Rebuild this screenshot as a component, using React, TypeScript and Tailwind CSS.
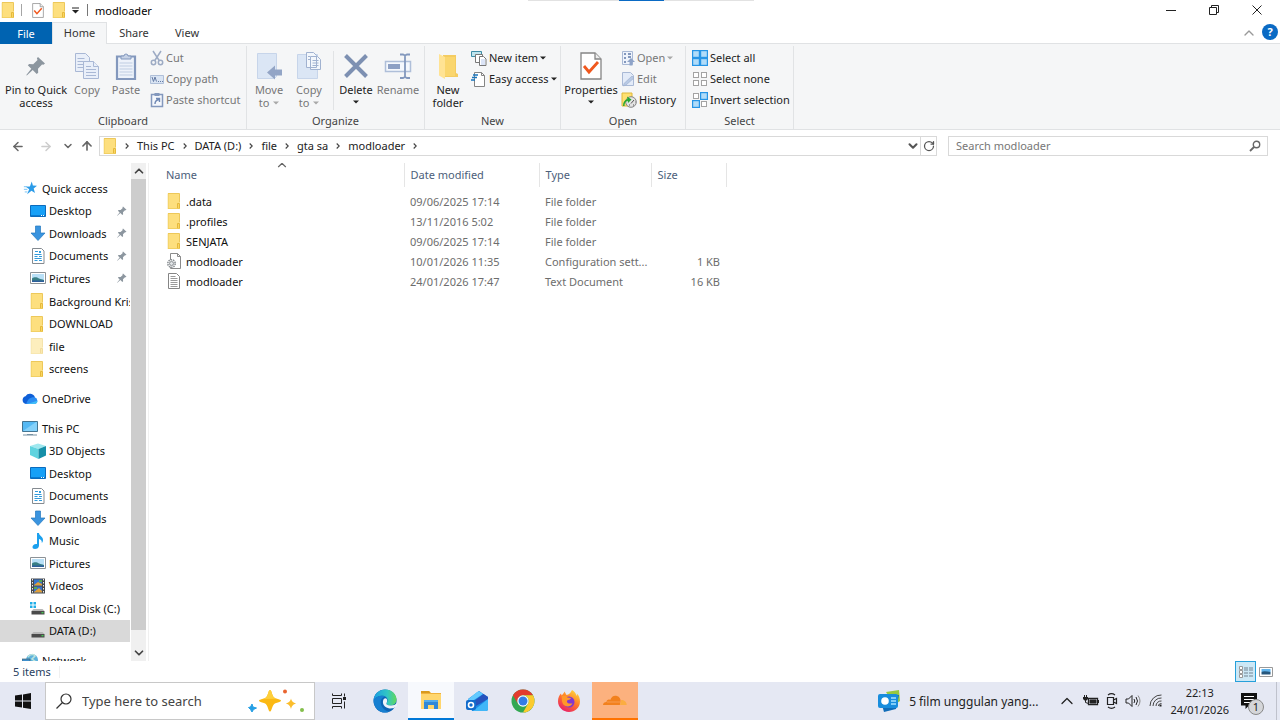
import type { ReactNode } from "react";
import { ChevronDown, ChevronUp, RotateCw, ArrowLeft, ArrowRight, ArrowUp } from "lucide-react";

function FolderIcon({ faded = false, className = "h-4 w-[14px]" }: { faded?: boolean; className?: string }) {
  return (
    <svg viewBox="0 0 14 16" className={`shrink-0 ${className}`} opacity={faded ? 0.5 : 1}>
      <path d="M1 .5h11.5V16H1z" fill="#fddf7e" />
      <path d="M1 .5h11.5v9" fill="none" stroke="#edc85a" />
      <path d="M10.500 10.500h2v5h-2z" fill="#fbd660" stroke="#e5b93c" />
      <path d="M1 15.500h12M1.200.5V16" stroke="#efcb5d" strokeWidth=".8" />
    </svg>
  );
}

function CheckDocIcon({ className }: { className: string }) {
  return (
    <svg viewBox="0 0 22 28" className={`shrink-0 ${className}`}>
      <path d="M1 1h14l6 6v20H1z" fill="#fff" stroke="#858585" strokeWidth="1.300" />
      <path d="M15 1v6h6" fill="#eee" stroke="#858585" strokeWidth="1.300" />
      <path d="M4 14l5 6 9-10" fill="none" stroke="#f0581e" strokeWidth="2.800" />
    </svg>
  );
}

function PinIcon({ className }: { className: string }) {
  return (
    <svg viewBox="0 0 20 20" className={`shrink-0 ${className}`} fill="#8c969f">
      <path d="M12 1l7 6.500-1.600 1.200-1.400-.3-4 4.300.2 4-1.500 1.300-4-4L.8 19.500.3 19l5-6.200-3.500-3.500L3.200 8l4 .2L11.500 4l-.6-1.700z" />
    </svg>
  );
}

function CopyIcon() {
  return (
    <svg viewBox="0 0 26 28" className="h-7 w-[26px]">
      <g fill="#e9eff9" stroke="#a9b8d5">
        <path d="M1.500 1.500h10l4 4v14h-14z" />
        <path d="M3.500 6.500h7m-7 3h9m-9 3h9m-9 3h9" />
        <path d="M9.500 9.500h10l5 5v12h-15z" />
        <path d="M19.500 9.500v5h5M12 14.500h5m-5 3h10m-10 3h10m-10 3h10" />
      </g>
    </svg>
  );
}

function PasteIcon() {
  return (
    <svg viewBox="0 0 22 28" className="h-7 w-[22px]">
      <path d="M2 4.500h18V27H2z" fill="#edf2fa" stroke="#8398bd" strokeWidth="2.200" />
      <path d="M6 7V4h3a2 2 0 014 0h3v3z" fill="#c6d2e6" stroke="#8398bd" />
      <path d="M4.500 11h13m-13 3h13m-13 3h13m-13 3h13m-13 3h13" stroke="#bfcde2" />
    </svg>
  );
}

function CutIcon() {
  return (
    <svg viewBox="0 0 14 16" className="h-4 w-[14px]" fill="none" stroke="#9dabc4" strokeWidth="1.500">
      <path d="M3 1l6.500 10M11 1L4.500 11" />
      <circle cx="3.500" cy="12.500" r="2.200" />
      <circle cx="10.500" cy="12.500" r="2.200" />
    </svg>
  );
}

function CopyPathIcon() {
  return (
    <svg viewBox="0 0 14 16" className="h-4 w-[14px]">
      <path d="M.5 4.500h13v8H.5z" fill="#d9e4f3" stroke="#afbfd8" />
      <path d="M2 6l1.500 4.500L5 6l1.500 4.500" fill="none" stroke="#667ca5" />
      <path d="M8 10.500h1m1 0h1m1 0h1" stroke="#667ca5" />
    </svg>
  );
}

function PasteShortcutIcon() {
  return (
    <svg viewBox="0 0 14 16" className="h-4 w-[14px]">
      <path d="M1.500 2.500h11v12h-11z" fill="#f4f7fc" stroke="#8398bd" strokeWidth="1.500" />
      <path d="M4.500 1h5v3h-5z" fill="#8398bd" />
      <path d="M5 12c0-3 1-4 4-4.500M6 6.500h3.500V10" fill="none" stroke="#6f88b4" strokeWidth="1.400" />
    </svg>
  );
}

function MoveIcon() {
  return (
    <svg viewBox="0 0 26 28" className="h-7 w-[26px]">
      <path d="M1.500 1.500h19v23l-2 2h-17z" fill="#dbe6f5" stroke="#c7d5ea" />
      <path d="M11 20.500l8-7v4h7v6h-7v4z" fill="#93a5c6" />
    </svg>
  );
}

function CopyToIcon() {
  return (
    <svg viewBox="0 0 26 28" className="h-7 w-[26px]">
      <path d="M1.500 2.500h20v24h-20z" fill="#dbe6f5" stroke="#c7d5ea" />
      <path d="M10.500.5h7l3 3v12h-10zM14.500 4.500h7l3 3v10h-10z" fill="#f3f7fc" stroke="#a1b2d0" />
      <path d="M12 4.500h2m-2 3h2M16.500 8.500h6m-6 2.500h6m-6 2.500h6" stroke="#a1b2d0" />
    </svg>
  );
}

function DeleteIcon() {
  return (
    <svg viewBox="0 0 26 28" className="h-7 w-[26px]">
      <path d="M2.500 3.500l21 21m0-21l-21 21" stroke="#7d90b2" strokeWidth="4" />
    </svg>
  );
}

function RenameIcon() {
  return (
    <svg viewBox="0 0 28 28" className="h-7 w-7" fill="none">
      <path d="M1.500 9.500h25v10h-25z" fill="#f5f8fd" stroke="#afbfd9" strokeWidth="1.500" />
      <path d="M4 12h12v5H4z" fill="#8da0c4" />
      <path d="M16 2.500h3l2 1 2-1h3M21 3v22M16 26h3l2-1 2 1h3" stroke="#8398bd" strokeWidth="1.800" />
    </svg>
  );
}

function NewFolderIcon() {
  return (
    <svg viewBox="0 0 20 28" className="h-7 w-5">
      <path d="M5 3h13v18l2 1v3H5z" fill="#f4cc61" />
      <path d="M1 2l6 3v22l-6-3.500z" fill="#ffe394" />
      <path d="M7 5h10v19H7z" fill="#fad66e" />
    </svg>
  );
}

function NewItemIcon() {
  return (
    <svg viewBox="0 0 16 16" className="h-4 w-4">
      <path d="M.5 1.500h10v5H.5z" fill="#bfe5ee" stroke="#3e8ca5" />
      <path d="M4.500 4.500h7v8h-7z" fill="#fff" stroke="#777" />
      <path d="M8.500 6.500h4l2.500 2.500v6.500H8.500z" fill="#fff" stroke="#777" />
      <path d="M10 10h4m-4 2h4m-4 2h4" stroke="#b7c9ee" />
    </svg>
  );
}

function EasyAccessIcon() {
  return (
    <svg viewBox="0 0 16 16" className="h-4 w-4">
      <path d="M3.500 1.500h7l3 3v11h-10z" fill="#fff" stroke="#858585" />
      <path d="M10.500 1.500v3h3" fill="none" stroke="#858585" />
      <path d="M2 4h5M1 6.500h5M0 9h4" stroke="#1976bd" strokeWidth="1.500" />
    </svg>
  );
}

function OpenIcon() {
  return (
    <svg viewBox="0 0 14 16" className="h-4 w-[14px]">
      <path d="M1.500 1.500h10v13h-10z" fill="#eef3fb" stroke="#a9b9d5" />
      <path d="M3 4h2m-2 4h2m-2 4h2M7 4h3M7 7h3" stroke="#8398bd" strokeWidth="2" />
      <path d="M6 12l4-4 4 4h-2.500v3.500h-3V12z" fill="#8ea3c8" />
    </svg>
  );
}

function EditIcon() {
  return (
    <svg viewBox="0 0 14 16" className="h-4 w-[14px]">
      <path d="M1.500 1.500h8l3 3v10h-11z" fill="#e3ebf8" stroke="#a9b9d5" />
      <path d="M3 12.500L11 5l2 2-8 7-2.500 1z" fill="#b8c9e4" stroke="#a0b2d0" strokeWidth=".7" />
    </svg>
  );
}

function HistoryIcon() {
  return (
    <svg viewBox="0 0 16 16" className="h-4 w-4">
      <path d="M1 1h10v13H1z" fill="#ffe071" stroke="#dfb83a" />
      <circle cx="10" cy="10" r="5.300" fill="#e3e3e3" stroke="#858585" />
      <path d="M2 14c0-4 1.500-6 4.500-7L6 4.500l4.500 3L7 11l-.3-2.200C4.500 9.500 3.500 11 3.500 14z" fill="#27a830" />
      <path d="M10 11.500l3-3.500M8 13h1m3 0h1m1-3h.5" stroke="#555" />
    </svg>
  );
}

function SelectIcon({ filled }: { filled: boolean[] }) {
  return (
    <svg viewBox="0 0 16 16" className="h-4 w-4">
      {filled.map((on, i) => {
        const x = (i % 2) * 8;
        const y = i > 1 ? 8 : 0;
        return on ? (
          <rect key={i} x={x + 0.6} y={y + 0.6} width="6.800" height="6.800" fill="#b1dcf9" stroke="#2795e6" strokeWidth="1.200" />
        ) : (
          <rect key={i} x={x + 1.5} y={y + 1.5} width="5" height="5" fill="#fff" stroke="#a3a3a3" />
        );
      })}
    </svg>
  );
}

function StarIcon() {
  return (
    <svg viewBox="0 0 16 16" className="ml-[1px] h-[14px] w-[14px]">
      <path d="M10 .5l1.300 4.700 4.700.3-3.800 3 1.500 5.200-4-2.500-5 4 2.400-5.800-3.800-2.800 4.600-.3z" fill="#2b9be8" />
      <path d="M1 6.500h4M1 9.500h4M2 12.500h3" stroke="#6abdf2" />
    </svg>
  );
}

function DesktopIcon() {
  return (
    <svg viewBox="0 0 16 16" className="h-4 w-4">
      <path d="M.5 2.500h15v11H.5z" fill="#17a0f7" stroke="#0b6bbd" />
      <path d="M1 12.500h14" stroke="#0a7bd0" />
      <path d="M11 12.500h1m1 0h1" stroke="#fff" />
    </svg>
  );
}

function DownloadIcon() {
  return (
    <svg viewBox="0 0 16 16" className="h-4 w-4">
      <path d="M5.500 1h5v7H15l-7 7.500L1 8h4.500z" fill="#3a94df" stroke="#2478bf" strokeWidth=".7" />
    </svg>
  );
}

function DocumentIcon() {
  return (
    <svg viewBox="0 0 16 16" className="h-4 w-4">
      <path d="M2.500.5h9l2.500 2.500v12.500H2.500z" fill="#fff" stroke="#858b91" />
      <path d="M5 3.500h3M4.500 6.500h7M4.500 8.500h3m1.500 0h3M4.500 10.500h7M4.500 12.500h3m1.500 0h3" stroke="#329bdc" />
      <path d="M9 3h2v2H9z" fill="#329bdc" />
    </svg>
  );
}

function PictureIcon() {
  return (
    <svg viewBox="0 0 16 16" className="h-4 w-4">
      <path d="M.5 2.500h15v11H.5z" fill="#fff" stroke="#8c9297" />
      <path d="M2 4h12v8H2z" fill="#b9e0f7" />
      <path d="M2 8.500c3-2 5-1 7 0s3 .5 5 1.500v2H2z" fill="#397f85" />
      <path d="M2 10.500h12V12H2z" fill="#2e5f9c" />
    </svg>
  );
}

function OneDriveIcon() {
  return (
    <svg viewBox="0 0 16 16" className="h-4 w-4">
      <path d="M4 13a4 4 0 01-.5-7.800A5.300 5.300 0 0113 6.500L7 13z" fill="#0f5fd7" />
      <path d="M4 13c2-5 4-7 8.500-6.800a3.500 3.500 0 01.3 6.800z" fill="#2b8df3" />
      <path d="M5 13c3-.5 7-2.500 10.500-3.200A3.200 3.200 0 0112.800 13z" fill="#42bdf8" />
    </svg>
  );
}

function PcIcon() {
  return (
    <svg viewBox="0 0 16 16" className="h-4 w-4">
      <path d="M.5 1.500h15v10H.5z" fill="#55b9f4" stroke="#437491" />
      <path d="M1 11L14 2h1v9z" fill="#84d1fa" />
      <path d="M5 14.500h6M1 15h14" stroke="#7691a3" />
    </svg>
  );
}

function CubeIcon() {
  return (
    <svg viewBox="0 0 16 16" className="h-4 w-4">
      <path d="M0 3l8-2.500L16 3 8.500 6z" fill="#9fe8ef" />
      <path d="M0 3l8.500 3v10L0 12z" fill="#5fd3df" />
      <path d="M8.500 6L16 3v9.500L8.500 16z" fill="#168fa8" />
    </svg>
  );
}

function MusicIcon() {
  return (
    <svg viewBox="0 0 16 16" className="h-4 w-4">
      <path d="M7 0h2c0 3 4 3.500 4 7 0 1.500-.7 2.500-1.200 3 .3-2.500-1-3.500-2.800-4v6.500C9 15 7 16 5 16s-2.500-1-2.500-2c0-2 2-3.500 4.500-3z" fill="#1ba0ee" />
    </svg>
  );
}

function VideoIcon() {
  return (
    <svg viewBox="0 0 16 16" className="h-4 w-4">
      <path d="M1 .5h14v15H1z" fill="#45484d" />
      <path d="M2.500 1v14M13.500 1v14" stroke="#eee" strokeDasharray="1.500 1.500" />
      <path d="M4 1.500h8v6H4zM4 8.500h8v6H4z" fill="#3773cb" />
      <path d="M4 7l4-3 4 2v1.500H4zM4 14l5-4 3 3v1.500H4z" fill="#e0a03b" />
      <path d="M9 2h3v2H9zM4 9h3v2H4z" fill="#52a75a" />
    </svg>
  );
}

function DriveIcon({ system = false }: { system?: boolean }) {
  return (
    <svg viewBox="0 0 16 16" className="h-4 w-4">
      {system && <path d="M0 2h2.500v2.500H0zM3.500 2H6v2.500H3.500zM0 5.500h2.500V8H0zM3.500 5.500H6V8H3.500z" fill="#20aee8" />}
      <path d="M3.500 9h9l2 2h-13z" fill="#b7b7b7" />
      <path d="M1.500 11h13v3.500h-13z" fill="#4b4b4b" />
      <path d="M11.500 12.700h2" stroke="#43da54" strokeWidth="1.200" />
    </svg>
  );
}

function NetworkIcon() {
  return (
    <svg viewBox="0 0 16 16" className="h-4 w-4">
      <circle cx="10" cy="7" r="6" fill="#5fb3dd" />
      <path d="M6 4c2-3 6-3 7-1l-3 3 4 3" fill="none" stroke="#bce4dc" strokeWidth="1.500" />
      <path d="M0 6h8v6H0z" fill="#3e8fcd" stroke="#46616f" strokeWidth=".7" />
    </svg>
  );
}

function ConfigFileIcon() {
  return (
    <svg viewBox="0 0 16 16" className="h-4 w-4">
      <path d="M3.500.5h7l3 3v12h-10z" fill="#fff" stroke="#8b8b8b" />
      <path d="M10.500.5v3h3" fill="none" stroke="#8b8b8b" />
      <circle cx="4.500" cy="10.500" r="3.700" fill="#fff" stroke="#8b9094" strokeWidth="1.600" strokeDasharray="1.500 .8" />
      <circle cx="4.500" cy="10.500" r="2" fill="#e2e5e7" stroke="#8b9094" />
    </svg>
  );
}

function TextFileIcon() {
  return (
    <svg viewBox="0 0 16 16" className="h-4 w-4">
      <path d="M1.500.5h8l3 3v12h-11z" fill="#fff" stroke="#858585" />
      <path d="M3.500 3.500h5m-5 2h7m-7 2h7m-7 2h7m-7 2h7m-7 2h7" stroke="#9a9a9a" />
    </svg>
  );
}

function Caret({ faded = false }: { faded?: boolean }) {
  return (
    <svg viewBox="0 0 6 4" className="h-1 w-[6px] shrink-0">
      <path d="M0 .5h6L3 3.500z" fill={faded ? "#a8a8a8" : "#222"} />
    </svg>
  );
}

type BigButtonProps = { icon: ReactNode; lines: string[]; width: string; disabled?: boolean; menu?: boolean };

function BigButton({ icon, lines, width, disabled, menu }: BigButtonProps) {
  return (
    <button className={`flex shrink-0 flex-col items-center pt-[3px] ${width} ${disabled ? "text-[#777]" : "text-[#222]"}`}>
      <span className="mb-[1px] flex h-8 items-center justify-center">{icon}</span>
      {lines.map((line, i) => (
        <span key={line} className="flex items-center gap-1 leading-[13px] whitespace-nowrap">
          {line}
          {menu && i > 0 && i === lines.length - 1 && <Caret faded={disabled} />}
        </span>
      ))}
      {menu && lines.length === 1 && (
        <span className="flex h-3 items-center">
          <Caret />
        </span>
      )}
    </button>
  );
}

type SmallButtonProps = { icon: ReactNode; label: string; disabled?: boolean; menu?: boolean };

function SmallButton({ icon, label, disabled, menu }: SmallButtonProps) {
  return (
    <button className={`flex h-[21px] items-center gap-[2px] whitespace-nowrap ${disabled ? "text-[#777]" : "text-[#222]"}`}>
      {icon}
      <span>{label}</span>
      {menu && <Caret faded={disabled} />}
    </button>
  );
}

function RibbonGroup({ label, width, children }: { label: string; width: string; children: ReactNode }) {
  return (
    <section className={`mt-[2px] flex shrink-0 flex-col border-r border-[#e1e3e5] ${width}`}>
      <div className="flex flex-1 pt-[1px]">{children}</div>
      <h2 className="pb-[1px] text-center leading-[14px] text-[#444]">{label}</h2>
    </section>
  );
}

function Ribbon() {
  return (
    <div className="flex h-[87px] shrink-0 overflow-hidden border-y border-[#e0e2e4] bg-[#f5f6f7]">
      <RibbonGroup label="Clipboard" width="w-[247px]">
        <BigButton width="w-[68px] ml-[2px]" icon={<PinIcon className="h-5 w-5" />} lines={["Pin to Quick", "access"]} />
        <BigButton width="w-[34px]" icon={<CopyIcon />} lines={["Copy"]} disabled />
        <BigButton width="w-[44px]" icon={<PasteIcon />} lines={["Paste"]} disabled />
        <div className="ml-[2px] flex flex-col">
          <SmallButton icon={<CutIcon />} label="Cut" disabled />
          <SmallButton icon={<CopyPathIcon />} label="Copy path" disabled />
          <SmallButton icon={<PasteShortcutIcon />} label="Paste shortcut" disabled />
        </div>
      </RibbonGroup>
      <RibbonGroup label="Organize" width="w-[178px]">
        <BigButton width="w-10 ml-[2px]" icon={<MoveIcon />} lines={["Move", "to"]} disabled menu />
        <BigButton width="w-10" icon={<CopyToIcon />} lines={["Copy", "to"]} disabled menu />
        <div className="my-1 ml-1 border-l border-[#e1e3e5]" />
        <BigButton width="w-[42px] ml-[1px]" icon={<DeleteIcon />} lines={["Delete"]} menu />
        <BigButton width="w-[42px]" icon={<RenameIcon />} lines={["Rename"]} disabled />
      </RibbonGroup>
      <RibbonGroup label="New" width="w-[136px]">
        <BigButton width="w-[40px] ml-[3px]" icon={<NewFolderIcon />} lines={["New", "folder"]} />
        <div className="ml-[3px] flex flex-col">
          <SmallButton icon={<NewItemIcon />} label="New item" menu />
          <SmallButton icon={<EasyAccessIcon />} label="Easy access" menu />
        </div>
      </RibbonGroup>
      <RibbonGroup label="Open" width="w-[125px]">
        <BigButton width="w-[56px] ml-[2px]" icon={<CheckDocIcon className="h-7 w-[22px]" />} lines={["Properties"]} menu />
        <div className="ml-[2px] flex flex-col">
          <SmallButton icon={<OpenIcon />} label="Open" disabled menu />
          <SmallButton icon={<EditIcon />} label="Edit" disabled />
          <SmallButton icon={<HistoryIcon />} label="History" />
        </div>
      </RibbonGroup>
      <RibbonGroup label="Select" width="w-[108px]">
        <div className="ml-[6px] flex flex-col">
          <SmallButton icon={<SelectIcon filled={[true, true, true, true]} />} label="Select all" />
          <SmallButton icon={<SelectIcon filled={[false, false, false, false]} />} label="Select none" />
          <SmallButton icon={<SelectIcon filled={[false, true, true, false]} />} label="Invert selection" />
        </div>
      </RibbonGroup>
    </div>
  );
}

function TitleBar() {
  return (
    <header className="flex h-[22px] shrink-0 items-center pb-[2px]">
      <FolderIcon className="ml-[1px] h-4 w-[14px]" />
      <span className="ml-[6px] h-3 border-l border-[#a5a5a5]" />
      <button aria-label="Properties" className="ml-[10px]">
        <CheckDocIcon className="h-[15px] w-3" />
      </button>
      <button aria-label="New folder" className="ml-2">
        <FolderIcon />
      </button>
      <button aria-label="Customize toolbar" className="ml-[6px]">
        <svg viewBox="0 0 7 7" className="h-[7px] w-[7px]">
          <path d="M0 1h7" stroke="#222" />
          <path d="M0 3h7L3.500 6.500z" fill="#222" />
        </svg>
      </button>
      <span className="ml-2 h-3 border-l border-[#777]" />
      <h1 className="ml-[7px] flex-1 text-black">modloader</h1>
      <button aria-label="Minimize" className="flex h-full w-[43px] items-center justify-center">
        <svg viewBox="0 0 10 10" className="h-[10px] w-[10px]">
          <path d="M0 5.500h10" stroke="#222" />
        </svg>
      </button>
      <button aria-label="Restore" className="flex h-full w-[43px] items-center justify-center">
        <svg viewBox="0 0 10 10" className="h-[10px] w-[10px]" fill="none" stroke="#222">
          <path d="M.5 2.500h7v7h-7zM2.500 2.500v-2h7v7h-2" />
        </svg>
      </button>
      <button aria-label="Close" className="mr-[2px] flex h-full w-[43px] items-center justify-center">
        <svg viewBox="0 0 10 10" className="h-[10px] w-[10px]" stroke="#222">
          <path d="M.5.5l9 9m0-9l-9 9" />
        </svg>
      </button>
    </header>
  );
}

function TabBar() {
  return (
    <nav className="flex h-[21px] shrink-0 items-stretch text-[#333]">
      <button className="relative -mb-px w-[52px] bg-[#0063b1] text-white">File</button>
      <button className="relative -mb-px w-[55px] border border-b-0 border-[#e0e2e4] bg-[#f5f6f7] pb-[2px]">Home</button>
      <button className="w-[54px]">Share</button>
      <button className="w-[52px]">View</button>
      <span className="flex-1" />
      <button aria-label="Collapse ribbon" className="mr-[5px]">
        <ChevronUp className="h-4 w-4 text-[#999]" strokeWidth={2} />
      </button>
      <button aria-label="Help" className="mt-[2px] mr-[2px] h-4 w-4 rounded-full bg-[#0a6ac4] text-[11px] leading-4 font-bold text-white">
        ?
      </button>
    </nav>
  );
}

const crumbs = ["This PC", "DATA (D:)", "file", "gta sa", "modloader"];

function CrumbArrow() {
  return (
    <svg viewBox="0 0 4 6" className="ml-2 h-[6px] w-1 shrink-0">
      <path d="M.7.5L3.200 3 .7 5.500" fill="none" stroke="#444" strokeWidth="1.100" />
    </svg>
  );
}

function AddressBar() {
  return (
    <div className="flex h-8 shrink-0 items-center text-[#666]">
      <button aria-label="Back" className="ml-[11px]">
        <ArrowLeft className="h-[15px] w-[14px]" strokeWidth={2.5} />
      </button>
      <button aria-label="Forward" className="ml-[14px] text-[#ccc]">
        <ArrowRight className="h-[15px] w-[14px]" strokeWidth={2.5} />
      </button>
      <button aria-label="Recent locations" className="ml-[9px]">
        <ChevronDown className="h-3 w-3" strokeWidth={3} />
      </button>
      <button aria-label="Up" className="ml-[6px]">
        <ArrowUp className="h-4 w-[14px]" strokeWidth={2.8} />
      </button>
      <div className="ml-[5px] flex h-5 flex-1 items-center border border-[#d9d9d9] text-[#222]">
        <FolderIcon className="ml-[3px] h-4 w-[14px]" />
        <CrumbArrow />
        {crumbs.map((crumb) => (
          <span key={crumb} className="flex items-center">
            <button className="ml-2 pb-[1px] whitespace-nowrap">{crumb}</button>
            <CrumbArrow />
          </span>
        ))}
        <span className="flex-1" />
        <button aria-label="Previous locations">
          <ChevronDown className="h-[14px] w-[14px] text-[#555]" strokeWidth={3.5} />
        </button>
        <button aria-label="Refresh" className="flex h-full w-4 items-center justify-center border-l border-[#d9d9d9]">
          <RotateCw className="h-3 w-3 text-[#555]" strokeWidth={2.5} />
        </button>
      </div>
      <label className="mr-3 ml-[11px] flex h-5 w-1/4 items-center border border-[#d9d9d9]">
        <input aria-label="Search modloader" placeholder="Search modloader" className="min-w-0 flex-1 pb-[1px] pl-[7px] outline-none placeholder:text-[#777]" />
        <svg viewBox="0 0 12 12" className="mr-[6px] h-3 w-3" fill="none" stroke="#666">
          <circle cx="7.500" cy="4.500" r="3.200" strokeWidth="1.400" />
          <path d="M5 7L1 11" strokeWidth="1.800" />
        </svg>
      </label>
    </div>
  );
}

type TreeItem = { label: string; icon: ReactNode; pinned?: boolean; selected?: boolean };

const quickAccess: TreeItem[] = [
  { label: "Desktop", icon: <DesktopIcon />, pinned: true },
  { label: "Downloads", icon: <DownloadIcon />, pinned: true },
  { label: "Documents", icon: <DocumentIcon />, pinned: true },
  { label: "Pictures", icon: <PictureIcon />, pinned: true },
  { label: "Background Kris", icon: <FolderIcon /> },
  { label: "DOWNLOAD", icon: <FolderIcon /> },
  { label: "file", icon: <FolderIcon faded /> },
  { label: "screens", icon: <FolderIcon /> },
];

const thisPc: TreeItem[] = [
  { label: "3D Objects", icon: <CubeIcon /> },
  { label: "Desktop", icon: <DesktopIcon /> },
  { label: "Documents", icon: <DocumentIcon /> },
  { label: "Downloads", icon: <DownloadIcon /> },
  { label: "Music", icon: <MusicIcon /> },
  { label: "Pictures", icon: <PictureIcon /> },
  { label: "Videos", icon: <VideoIcon /> },
  { label: "Local Disk (C:)", icon: <DriveIcon system /> },
  { label: "DATA (D:)", icon: <DriveIcon />, selected: true },
];

function TreeRoot({ label, icon }: { label: string; icon: ReactNode }) {
  return (
    <a href="#" className="flex items-center pl-[22px]">
      <span className="flex w-5 shrink-0">{icon}</span>
      {label}
    </a>
  );
}

function TreeChild({ label, icon, pinned, selected }: TreeItem) {
  return (
    <a href="#" className={`flex items-center pl-[30px] ${selected ? "bg-[#d9d9d9]" : ""}`}>
      <span className="flex w-[19px] shrink-0">{icon}</span>
      <span className="flex-1 whitespace-nowrap">{label}</span>
      {pinned && <PinIcon className="mr-[3px] h-[10px] w-[10px]" />}
    </a>
  );
}

function Sidebar() {
  return (
    <aside className="flex shrink-0 border-r border-[#f0f0f0] pr-[2px]">
      <nav className="w-[130px] overflow-hidden pt-[14px] text-[#111]">
        <div className="grid h-[203px] auto-rows-fr grid-cols-[130px]">
          <TreeRoot label="Quick access" icon={<StarIcon />} />
          {quickAccess.map((item) => (
            <TreeChild key={item.label} {...item} />
          ))}
        </div>
        <div className="my-[7px] grid h-[23px]">
          <TreeRoot label="OneDrive" icon={<OneDriveIcon />} />
        </div>
        <div className="grid h-[225px] auto-rows-fr grid-cols-[130px]">
          <TreeRoot label="This PC" icon={<PcIcon />} />
          {thisPc.map((item) => (
            <TreeChild key={item.label} {...item} />
          ))}
        </div>
        <div className="mt-[7px] grid h-[23px]">
          <TreeRoot label="Network" icon={<NetworkIcon />} />
        </div>
      </nav>
      <div className="ml-[1px] flex w-[15px] flex-col items-center bg-[#f0f0f0] text-[#444]">
        <ChevronUp className="my-[1px] h-[14px] w-[14px] shrink-0" strokeWidth={3} />
        <div className="w-full flex-1 bg-[#cdcdcd]" />
        <ChevronDown className="mt-4 mb-[1px] h-[14px] w-[14px] shrink-0" strokeWidth={3} />
      </div>
    </aside>
  );
}

const files = [
  { name: ".data", date: "09/06/2025 17:14", type: "File folder", size: "", icon: <FolderIcon /> },
  { name: ".profiles", date: "13/11/2016 5:02", type: "File folder", size: "", icon: <FolderIcon /> },
  { name: "SENJATA", date: "09/06/2025 17:14", type: "File folder", size: "", icon: <FolderIcon /> },
  { name: "modloader", date: "10/01/2026 11:35", type: "Configuration sett...", size: "1 KB", icon: <ConfigFileIcon /> },
  { name: "modloader", date: "24/01/2026 17:47", type: "Text Document", size: "16 KB", icon: <TextFileIcon /> },
];

function FileList() {
  return (
    <main className="min-w-0 flex-1 overflow-hidden pl-3">
      <table className="table-fixed border-collapse text-left text-[#6d6d6d]">
        <colgroup>
          <col className="w-[243px]" />
          <col className="w-[135px]" />
          <col className="w-[112px]" />
          <col className="w-[75px]" />
        </colgroup>
        <thead className="text-[#4c607a]">
          <tr className="h-6">
            <th className="relative border-r border-[#e5e5e5] p-0 pb-[2px] pl-[5px] font-normal">
              Name
              <ChevronUp className="absolute -top-[5px] left-[114px] h-[14px] w-[14px] text-[#666]" />
            </th>
            <th className="border-r border-[#e5e5e5] p-0 pb-[2px] pl-[6px] font-normal">Date modified</th>
            <th className="border-r border-[#e5e5e5] p-0 pb-[2px] pl-[6px] font-normal">Type</th>
            <th className="border-r border-[#e5e5e5] p-0 pb-[2px] pl-[6px] font-normal">Size</th>
          </tr>
        </thead>
        <tbody>
          <tr className="h-1" />
          {files.map((file) => (
            <tr key={file.name + file.type} className="h-5">
              <td className="p-0 pl-[6px] text-[#111]">
                <span className="flex items-center">
                  <span className="flex w-[19px] shrink-0">{file.icon}</span>
                  {file.name}
                </span>
              </td>
              <td className="p-0 pl-[6px] whitespace-nowrap">{file.date}</td>
              <td className="p-0 pl-[6px] whitespace-nowrap">{file.type}</td>
              <td className="p-0 pr-[6px] text-right whitespace-nowrap">{file.size}</td>
            </tr>
          ))}
        </tbody>
      </table>
    </main>
  );
}

function StatusBar() {
  return (
    <footer className="flex h-[21px] shrink-0 items-center pl-[13px] text-[#2a3f5f]">
      <span>5 items</span>
      <span className="ml-[8px] h-3 border-l border-[#f0f0f0]" />
      <span className="flex-1" />
      <button aria-label="Details view" className="flex h-[21px] w-[21px] items-center justify-center border border-[#26a0da] bg-[#cce8f6]">
        <svg viewBox="0 0 16 14" className="h-[14px] w-4" fill="none">
          <path d="M1.500 1.500h3v3h-3zM1.500 5.500h3v3h-3zM1.500 9.500h3v3h-3z" fill="#fff" stroke="#999" />
          <path d="M6 3h4m1 0h4M6 5h4m1 0h4M6 8h4m1 0h4M6 11h4m1 0h4" stroke="#738391" />
        </svg>
      </button>
      <button aria-label="Thumbnail view" className="mr-[7px] ml-[3px]">
        <svg viewBox="0 0 14 12" className="h-3 w-[14px]">
          <path d="M.5 1.500h13v9H.5z" fill="#fff" stroke="#999" />
          <path d="M2.500 3h9v3h-9z" fill="#5fb3ec" />
          <path d="M2.500 6c3-1.500 6 0 9 0v2.500h-9z" fill="#27577d" />
        </svg>
      </button>
    </footer>
  );
}

function TaskViewIcon() {
  return (
    <svg viewBox="0 0 16 16" className="h-4 w-4" fill="none" stroke="#222">
      <path d="M1.500 .5v2h9v-2M1.500 5.500h9v5h-9zM1.500 15.500v-2h9v2M13.500.5v3m0 5v7" />
      <path d="M12 4h3v3h-3z" fill="#222" stroke="none" />
    </svg>
  );
}

function EdgeIcon() {
  return (
    <svg viewBox="0 0 24 24" className="h-6 w-6">
      <defs>
        <linearGradient id="edgeTop" x1="0" x2="1">
          <stop offset="0" stopColor="#1b9de2" />
          <stop offset=".6" stopColor="#31c6c4" />
          <stop offset="1" stopColor="#61d95a" />
        </linearGradient>
      </defs>
      <circle cx="12" cy="12" r="11.500" fill="#0d63b4" />
      <path d="M.6 11C1.500 4.500 6.500.5 12.300.5c6.500 0 11.200 4.800 11.200 10 0 3.800-2.700 6-6 6-2.800 0-4.700-1-4.200-2.200.4-.8 1.300-1.300 1.300-3.200 0-2.200-2.200-4.300-5.700-4.300C5.600 6.800 2 8.500.6 11z" fill="url(#edgeTop)" />
      <path d="M.6 11c1.400-2.500 5-4.200 8.300-4.200 1.300 0 2.400.3 3.300.8-4.500 1.200-5.200 5.200-3.900 8.600 1.200 3.300 4.400 6 8 6.300C9 26 .5 20 .6 11z" fill="#167fd1" />
      <path d="M11 9.800c-2 2.500-1.600 8 4.600 9.500 2.700.7 5.700-.2 8.400-2.300V14c-1.500 1.800-4 2.700-6.500 2.500-3-.2-4.700-1.100-4.100-2.300.4-.8.900-1.600.7-3.300-.2-1.500-1.500-2.500-3.100-1.100z" fill="#eef2fa" />
    </svg>
  );
}

function ExplorerIcon() {
  return (
    <svg viewBox="0 0 22 20" className="h-5 w-[22px]">
      <path d="M1 1h8l2 2h10v16H1z" fill="#efb13b" />
      <path d="M1 4h20v15H1z" fill="#ffd66e" />
      <path d="M1 1h8l1.500 2H1z" fill="#d99a1d" />
      <path d="M4 19v-8a1 1 0 011-1h12a1 1 0 011 1v8h-4v-4H8v4z" fill="#3188d8" />
      <path d="M4 11a1 1 0 011-1h12a1 1 0 011 1v1H4z" fill="#55aceb" />
    </svg>
  );
}

function OutlookIcon() {
  return (
    <svg viewBox="0 0 24 24" className="h-6 w-6">
      <path d="M3 10L14 2l9 6v12a2 2 0 01-2 2H7z" fill="#198ae5" />
      <path d="M3 10.500l9-7.500q1.500-1.200 3 0l3 2L6 13z" fill="#62caff" />
      <path d="M9 12l9.500-7L23 8v2l-12 7z" fill="#2652bd" />
      <path d="M23 10v10a2 2 0 01-2 2H8z" fill="#41b7f8" />
      <rect x="1" y="11" width="10" height="10" rx="2" fill="#116bcc" />
      <circle cx="6" cy="16" r="2.500" fill="none" stroke="#fff" strokeWidth="1.600" />
    </svg>
  );
}

function ChromeIcon() {
  return (
    <svg viewBox="0 0 24 24" className="h-6 w-6">
      <circle cx="12" cy="12" r="11.500" fill="#33a852" />
      <path d="M2 6.300A11.500 11.500 0 0122 6.300H12a5.700 5.700 0 00-5 8.600z" fill="#e33b2e" />
      <path d="M22 6.300A11.500 11.500 0 0112 23.500l5-8.700a5.700 5.700 0 00-5-8.500z" fill="#fccb2e" />
      <circle cx="12" cy="12" r="5.700" fill="#fff" />
      <circle cx="12" cy="12" r="4.500" fill="#347de6" />
    </svg>
  );
}

function FirefoxIcon() {
  return (
    <svg viewBox="0 0 24 24" className="h-6 w-6">
      <defs>
        <linearGradient id="foxBody" x1=".9" y1="0" x2=".3" y2="1">
          <stop offset="0" stopColor="#ffe63f" />
          <stop offset=".5" stopColor="#ff7b29" />
          <stop offset="1" stopColor="#e91e68" />
        </linearGradient>
      </defs>
      <path d="M15 1c3.500 2 3.700 4 5 6 .2-1 0-1.700-.3-2.400C22 6.500 23 9.500 23 12.500 23 18.500 18 23 12 23S1 18.300 1 12.300C1 8.500 2.500 6 4 4.500l.6 2C6 5 7 4 7.500 2.500L9.500 6c2.500-.3 4-2 5.500-5z" fill="url(#foxBody)" />
      <circle cx="12" cy="13" r="5.500" fill="#8238cf" />
      <path d="M4.600 7C7 6 9.500 7 10.500 8.500L14 9c-.3 1.400-1.700 1.800-3 2-1.300.5-1.500 2-.2 3 1.600 1 3 .2 4.700.5-2 4-7.500 3.800-9.500.5C4.500 12.500 5 9 4.600 7z" fill="#ff9829" />
    </svg>
  );
}

function CloudflareIcon() {
  return (
    <svg viewBox="0 0 24 12" className="h-3 w-6">
      <path d="M0 11c0-2 1.500-3 3.500-3 0-2 2-3 3.700-2C8.500 2.500 11 1 14 2c2.500.8 4 3 3.500 6l-.7 3z" fill="#f2811e" />
      <path d="M17 11l1.200-5c3-.5 5.300 2 5.500 5z" fill="#fbad41" />
      <path d="M4 8h13" stroke="#fba668" strokeWidth=".7" />
    </svg>
  );
}

const pinnedApps = [
  { name: "Task View", icon: <TaskViewIcon />, style: "" },
  { name: "Microsoft Edge", icon: <EdgeIcon />, style: "" },
  { name: "File Explorer", icon: <ExplorerIcon />, style: "border-b-2 border-[#0078d7] bg-[#f7f9fd]" },
  { name: "Outlook", icon: <OutlookIcon />, style: "" },
  { name: "Google Chrome", icon: <ChromeIcon />, style: "" },
  { name: "Firefox", icon: <FirefoxIcon />, style: "" },
  { name: "Cloudflare WARP", icon: <CloudflareIcon />, style: "border-b-2 border-[#ff7300] bg-[#fcb17e]" },
];

function Taskbar() {
  return (
    <div className="flex h-[38px] shrink-0 items-stretch bg-[#e5e8f3] text-[13px] text-[#222]">
      <button aria-label="Start" className="flex w-[45px] items-center justify-center">
        <svg viewBox="0 0 16 16" className="h-4 w-4">
          <path d="M0 2.500L7 1.500v6H0zM8 1.400L16 0v7.500H8zM0 8.500h7v6l-7-1zM8 8.500h8V16l-8-1.300z" fill="#111" />
        </svg>
      </button>
      <label className="mr-[1px] flex w-[270px] items-center border border-[#c8c8c8] bg-white">
        <svg viewBox="0 0 16 16" className="ml-[10px] h-4 w-4" fill="none" stroke="#333" strokeWidth="1.200">
          <circle cx="10" cy="6" r="5" />
          <path d="M6.500 9.500L.5 15.500" />
        </svg>
        <input aria-label="Type here to search" placeholder="Type here to search" className="ml-[10px] min-w-0 flex-1 outline-none placeholder:text-[#444]" />
        <svg viewBox="0 0 60 26" className="mr-2 h-[26px] w-[60px]">
          <path d="M24 2c1.200 0 1.600 2.500 2.500 5s2 3 4.500 3.800 4 1 4 1.900-1.500 1.200-4 2-3.500 1.500-4.500 4-1.300 4.800-2.500 4.800-1.600-2.300-2.500-4.800-2-3.200-4.500-4-4-1.100-4-2 1.500-1.100 4-1.900 3.500-1.300 4.500-3.800S22.800 2 24 2z" fill="#fbb914" />
          <path d="M24 2c1.200 0 1.600 2.500 2.500 5s2 3 4.500 3.800L17 11c2.500-.8 3.500-1.500 4.500-4S22.800 2 24 2z" fill="#fdcf3c" />
          <path d="M45 10.500c1 3.500 2 3.800 5 5-3 1.200-4 2-5 5.500-1-3.500-2-4.300-5-5.500 3-1.200 4-1.500 5-5z" fill="#fbbd2c" />
          <path d="M6 16l1 3 3.500 1-3 1.500L6 24l-1.500-2.500L2.500 19.500l2-.5z" fill="#259fe4" stroke="#259fe4" />
          <circle cx="39" cy="3.500" r="2" fill="#e96430" />
          <circle cx="56" cy="22" r="2" fill="#83bf4b" />
        </svg>
      </label>
      {pinnedApps.map((app) => (
        <button key={app.name} aria-label={app.name} className={`flex w-[46px] items-center justify-center ${app.style}`}>
          {app.icon}
        </button>
      ))}
      <span className="flex-1" />
      <button className="flex items-center gap-2 text-[12px] whitespace-nowrap">
        <svg viewBox="0 0 24 24" className="h-6 w-6">
          <path d="M9 3l13-2 1 11-6 4z" fill="#97c83f" />
          <path d="M2 6h20l-3 14-12 3z" fill="#106cb8" />
          <rect x="1" y="5" width="20" height="14" rx="2" fill="#188ddd" />
          <circle cx="8" cy="12" r="3.800" fill="#fff" />
          <path d="M14 9h5m-5 3h5m-5 3h5" stroke="#a6e2ff" strokeWidth="1.500" />
        </svg>
        5 film unggulan yang...
      </button>
      <div className="ml-[19px] flex items-center gap-[6px]">
        <button aria-label="Show hidden icons">
          <ChevronUp className="h-5 w-5" strokeWidth={1.5} />
        </button>
        <svg viewBox="0 0 16 12" className="h-3 w-4" fill="none" stroke="#222">
          <path d="M5.500 3.500h9v6h-9z" strokeWidth="1.300" />
          <path d="M7 5h6v3H7z" fill="#222" />
          <path d="M15.500 5v3M2.500 4v3.500l3 1M1.500 0v2m2-2v2" />
          <path d="M0 2h5v2L3.500 5.500h-2L0 4z" fill="#222" stroke="none" />
        </svg>
        <svg viewBox="0 0 14 16" className="h-4 w-[14px]" fill="none" stroke="#222">
          <path d="M2.500 4.500h6v7h-6zM8.500 7l3-1.500v5L8.500 9M3 2C5 .5 8 .5 10 2M3 14c2 1.500 5 1.500 7 0" strokeWidth="1.200" />
        </svg>
        <svg viewBox="0 0 16 14" className="h-[14px] w-4" fill="none" stroke="#222">
          <path d="M1 5h2.500L7 1.500v11L3.500 9H1zM9 5q1.500 2 0 4M11 3q3 4 0 8" />
          <path d="M13 1.500q4 5.500 0 11" stroke="#888" />
        </svg>
        <svg viewBox="0 0 14 14" className="ml-[2px] h-[14px] w-[14px]" fill="none" stroke="#444">
          <path d="M1 12A11 11 0 0112.500 1M4 12a8 8 0 018.500-8M7 12a5 5 0 015.500-5M9.500 12a2.500 2.500 0 013-2.500" />
          <path d="M10.500 10.500h2v2h-2z" fill="#222" stroke="none" />
        </svg>
      </div>
      <time className="ml-[7px] flex flex-col justify-center text-center text-[11px] leading-[17px]">
        <span>22:13</span>
        <span>24/01/2026</span>
      </time>
      <button aria-label="Notifications" className="relative ml-3 flex w-[26px] items-center">
        <svg viewBox="0 0 16 16" className="h-4 w-4">
          <path d="M0 0h16v12.500H8L4.500 16v-3.500H0z" fill="#111" />
          <path d="M3 3.500h10M3 6.500h10M3 9.500h6" stroke="#fff" />
        </svg>
        <span className="absolute top-[17px] left-[7px] h-4 w-4 rounded-full border border-[#888] bg-[#d5d6d9] text-[11px] leading-[14px]">1</span>
      </button>
      <span className="mr-[3px] ml-[9px] border-l border-[#bfc2cc]" />
    </div>
  );
}

export default function App() {
  return (
    <div className="relative flex h-screen flex-col overflow-hidden bg-white font-['Noto_Sans','Open_Sans',sans-serif] text-[11px] leading-[15px]">
      <div className="absolute top-0 left-[528px] flex h-px w-[226px] justify-center bg-[#e2e2e2]">
        <span className="h-px w-[45px] bg-[#0a6ac4]" />
      </div>
      <TitleBar />
      <TabBar />
      <Ribbon />
      <AddressBar />
      <div className="mt-[1px] flex min-h-0 flex-1">
        <Sidebar />
        <FileList />
      </div>
      <StatusBar />
      <Taskbar />
    </div>
  );
}
